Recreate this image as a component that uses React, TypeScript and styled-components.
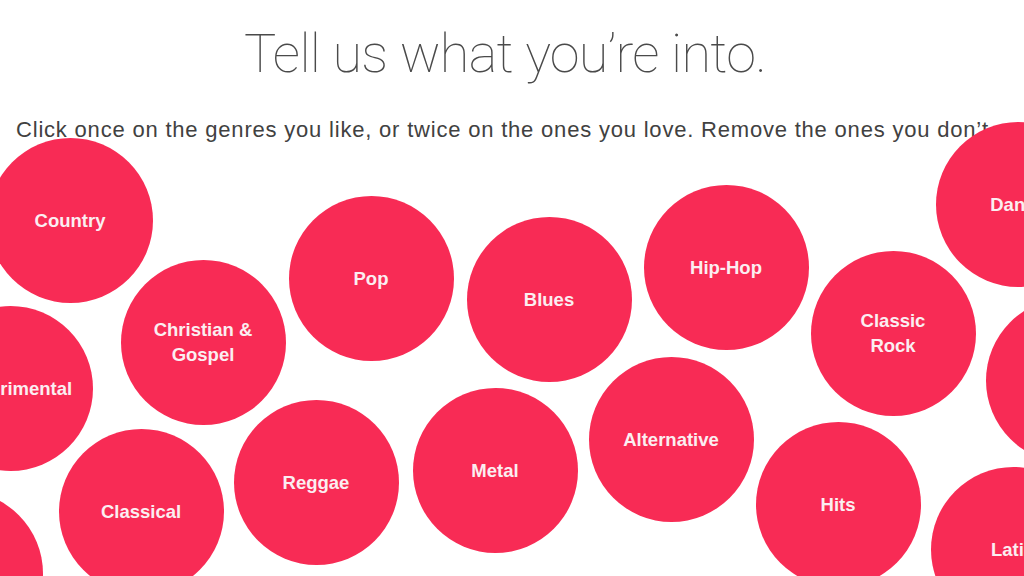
import React from 'react'
import styled, { createGlobalStyle } from 'styled-components'

const GlobalStyle = createGlobalStyle`
  html, body {
    margin: 0;
    padding: 0;
    background: #ffffff;
    overflow: hidden;
  }
  body {
    font-family: "Liberation Sans", Arial, sans-serif;
  }
`

type Genre = { name: string, x: number, y: number }

// centre points of each bubble on the canvas
const genres: Genre[] = [
    { name: 'Country', x: 70, y: 220 },
    { name: 'Christian & Gospel', x: 203, y: 342 },
    { name: 'Pop', x: 371, y: 278 },
    { name: 'Blues', x: 549, y: 299 },
    { name: 'Hip-Hop', x: 726, y: 267 },
    { name: 'Classic Rock', x: 893, y: 333 },
    { name: 'Dance', x: 1018, y: 204 },
    { name: 'Jazz', x: 1068, y: 380 },
    { name: 'Experimental', x: 10, y: 388 },
    { name: 'Classical', x: 141, y: 511 },
    { name: 'Reggae', x: 316, y: 482 },
    { name: 'Metal', x: 495, y: 470 },
    { name: 'Alternative', x: 671, y: 439 },
    { name: 'Hits', x: 838, y: 504 },
    { name: 'Latin', x: 1013, y: 549 },
    { name: 'Kids', x: -40, y: 573 },
]

const SIZE = 165

export default function App() {
    return (
        <Stage>
            <GlobalStyle />
            <Header>
                <Title>Tell us what you’re into.</Title>
                <Hint>Click once on the genres you like, or twice on the ones you love. Remove the ones you don’t.</Hint>
            </Header>
            <Cloud>
                {genres.map((g) => (
                    <Bubble key={g.name} $x={g.x} $y={g.y}>
                        <Label>{g.name}</Label>
                    </Bubble>
                ))}
            </Cloud>
        </Stage>
    )
}

const Stage = styled.div`
    position: relative;
    width: 1024px;
    height: 576px;
    overflow: hidden;
    background: #fff;
`

const Header = styled.div`
    display: flex;
    flex-direction: column;
    padding-top: 22px;
`

const Title = styled.h1`
    margin: 0;
    text-align: center;
    padding-right: 14px;
    font-family: Roboto, "Liberation Sans", sans-serif;
    font-weight: 100;
    font-size: 54px;
    line-height: 64px;
    color: #4a4a4a;
    letter-spacing: -0.7px;
`

const Hint = styled.p`
    margin: 31px 0 0 16px;
    font-family: "Liberation Sans", Arial, sans-serif;
    font-size: 22px;
    line-height: 26px;
    letter-spacing: 0.8px;
    color: #414141;
    white-space: nowrap;
`

const Cloud = styled.div`
    position: absolute;
    inset: 0;
`

const Bubble = styled.div<{ $x: number, $y: number }>`
    position: absolute;
    left: ${(p) => p.$x - SIZE / 2}px;
    top: ${(p) => p.$y - SIZE / 2}px;
    width: ${SIZE}px;
    height: ${SIZE}px;
    border-radius: 50%;
    background: #f82b55;
    display: flex;
    align-items: center;
    justify-content: center;
    text-align: center;
    cursor: pointer;
`

const Label = styled.span`
    max-width: 108px;
    font-family: "Liberation Sans", Arial, sans-serif;
    font-weight: 700;
    font-size: 18.5px;
    line-height: 25px;
    color: #fbeef1;
`
